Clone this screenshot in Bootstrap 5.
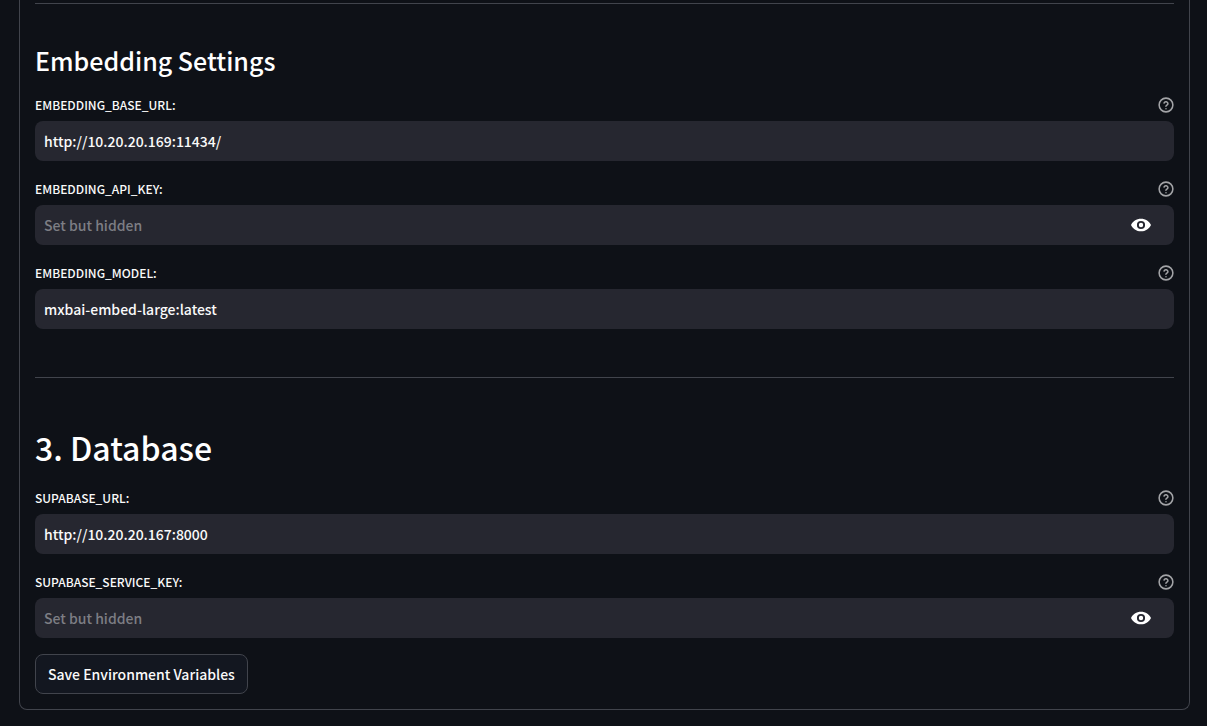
<!DOCTYPE html>
<html lang="en" data-bs-theme="dark">
<head>
<meta charset="utf-8">
<meta name="viewport" content="width=device-width, initial-scale=1">
<title>Environment Settings</title>
<link href="https://cdn.jsdelivr.net/npm/bootstrap@5.3.0/dist/css/bootstrap.min.css" rel="stylesheet">
<style>
  body { background: #0e1117; color: #fafafa; font-family: "Noto Sans CJK SC", "Noto Sans", sans-serif; font-size: 14px; font-weight: 500; }
  .env-panel { border: 1px solid #41444c; border-top: 0; border-radius: 0 0 8px 8px; margin: 0 17px 16px 19px; padding: 3px 15px 15px; }
  .rule { margin: 0; border-top: 1px solid #41444c; opacity: 1; }
  .section-title { font-size: 25px; line-height: 36px; font-weight: 500; margin: 38px 0 15px; }
  .page-title { font-size: 32px; line-height: 44px; font-weight: 500; margin: 47px 0 17px; }
  .field-head { height: 24px; margin-bottom: 4px; }
  .field-head label { font-size: 12px; line-height: 24px; }
  .help-btn, .eye-btn { background: none; border: 0; padding: 0; color: #a3a4a7; line-height: 1; }
  .eye-btn { color: #fff; padding: 0 23px; }
  .field-box { background: #262730; border-radius: 8px; height: 40px; overflow: hidden; }
  .field-box .form-control { background: transparent; border: 0; box-shadow: none; color: #fafafa; font-size: 14px; font-weight: 500; line-height: 24px; padding: 8px 9px; }
  .field-box .form-control::placeholder { color: #7d7e84; opacity: 1; }
  .save-btn { background: #131720; border: 1px solid #41444c; border-radius: 8px; color: #fafafa; font-size: 14px; font-weight: 500; line-height: 24px; padding: 7px 12px; }
</style>
</head>
<body>
<svg class="d-none" aria-hidden="true">
  <symbol id="help" viewBox="0 0 24 24" fill="none" stroke="currentColor" stroke-width="2.300" stroke-linecap="round" stroke-linejoin="round">
    <circle cx="12" cy="12" r="10.300"/><path d="M9.090 9a3 3 0 0 1 5.830 1c0 2-3 2.500-3 4M12 17.500h.010"/>
  </symbol>
  <symbol id="eye" viewBox="1 4 22 16" fill="currentColor">
    <path fill-rule="evenodd" d="M12 5C7 5 2.730 8 1 12c1.730 4 6 7 11 7s9.270-3 11-7c-1.730-4-6-7-11-7zM12 16.500a4.500 4.500 0 1 1 0-9 4.500 4.500 0 0 1 0 9zM12 9.600a2.400 2.400 0 1 0 0 4.800 2.400 2.400 0 0 0 0-4.800z"/>
  </symbol>
</svg>
<main>
  <form class="env-panel">
    <hr class="rule">
    <h2 class="section-title">Embedding Settings</h2>
    <div class="d-flex flex-column gap-3 mb-5">
      <div>
        <div class="field-head d-flex justify-content-between align-items-center">
          <label for="baseUrl">EMBEDDING_BASE_URL:</label>
          <button type="button" class="help-btn d-flex" aria-label="Help"><svg width="16" height="16"><use href="#help"/></svg></button>
        </div>
        <div class="field-box d-flex"><input class="form-control" type="text" id="baseUrl" value="http://10.20.20.169:11434/"></div>
      </div>
      <div>
        <div class="field-head d-flex justify-content-between align-items-center">
          <label for="apiKey">EMBEDDING_API_KEY:</label>
          <button type="button" class="help-btn d-flex" aria-label="Help"><svg width="16" height="16"><use href="#help"/></svg></button>
        </div>
        <div class="field-box d-flex">
          <input class="form-control" type="password" id="apiKey" placeholder="Set but hidden">
          <button type="button" class="eye-btn d-flex align-items-center" aria-label="Show password"><svg width="20" height="16"><use href="#eye"/></svg></button>
        </div>
      </div>
      <div>
        <div class="field-head d-flex justify-content-between align-items-center">
          <label for="model">EMBEDDING_MODEL:</label>
          <button type="button" class="help-btn d-flex" aria-label="Help"><svg width="16" height="16"><use href="#help"/></svg></button>
        </div>
        <div class="field-box d-flex"><input class="form-control" type="text" id="model" value="mxbai-embed-large:latest"></div>
      </div>
    </div>
    <hr class="rule">
    <h1 class="page-title">3. Database</h1>
    <div class="d-flex flex-column gap-3 mb-3">
      <div>
        <div class="field-head d-flex justify-content-between align-items-center">
          <label for="dbUrl">SUPABASE_URL:</label>
          <button type="button" class="help-btn d-flex" aria-label="Help"><svg width="16" height="16"><use href="#help"/></svg></button>
        </div>
        <div class="field-box d-flex"><input class="form-control" type="text" id="dbUrl" value="http://10.20.20.167:8000"></div>
      </div>
      <div>
        <div class="field-head d-flex justify-content-between align-items-center">
          <label for="dbKey">SUPABASE_SERVICE_KEY:</label>
          <button type="button" class="help-btn d-flex" aria-label="Help"><svg width="16" height="16"><use href="#help"/></svg></button>
        </div>
        <div class="field-box d-flex">
          <input class="form-control" type="password" id="dbKey" placeholder="Set but hidden">
          <button type="button" class="eye-btn d-flex align-items-center" aria-label="Show password"><svg width="20" height="16"><use href="#eye"/></svg></button>
        </div>
      </div>
    </div>
    <button type="button" class="save-btn">Save Environment Variables</button>
  </form>
</main>
<script src="https://cdn.jsdelivr.net/npm/bootstrap@5.3.0/dist/js/bootstrap.bundle.min.js"></script>
</body>
</html>
